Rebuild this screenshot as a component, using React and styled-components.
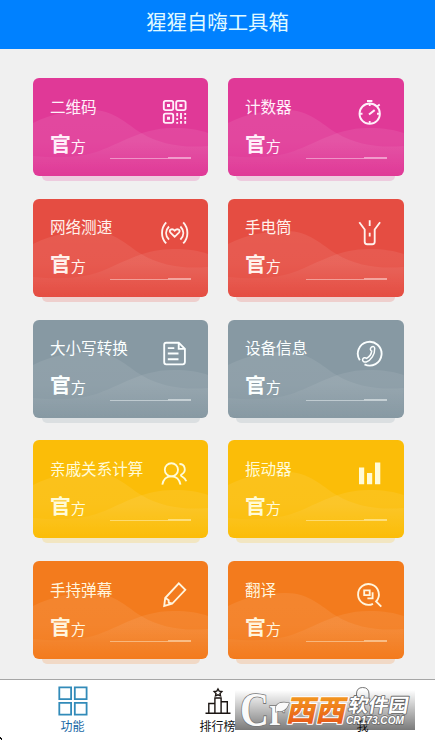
import React from 'react'
import styled, { createGlobalStyle } from 'styled-components'

const GlobalStyle = createGlobalStyle`
    * { box-sizing: border-box; }

    body {
        margin: 0;
        background: #f0f0f0;
        font-family: "Noto Sans CJK SC", "Noto Sans", sans-serif;
        overflow: hidden;
    }
`

const Page = styled.div`
    width: 435px;
    height: 740px;
    display: flex;
    flex-direction: column;
    position: relative;
    overflow: hidden;
`

const Header = styled.header`
    height: 49px;
    flex: none;
    padding-bottom: 8px;
    display: flex;
    align-items: center;
    justify-content: center;
    background: #0081ff;
`

const HeaderTitle = styled.h1`
    margin: 0;
    font-size: 20.4px;
    line-height: 30px;
    font-weight: 400;
    color: #e0faff;
`

const CardGrid = styled.main`
    flex: 1;
    padding: 29px 31px 0 33px;
    display: grid;
    grid-template-columns: 175.3px 175.7px;
    grid-auto-rows: 98px;
    column-gap: 19.7px;
    row-gap: 22.75px;
`

const Card = styled.section`
    position: relative;
    border-radius: 6px;
    background: ${props => props.$color};
    color: ${props => props.$ink};

    &::after {
        content: '';
        position: absolute;
        left: 8.5px;
        right: 8.5px;
        bottom: -5px;
        height: 5px;
        border-radius: 0 0 5px 5px;
        background: ${props => props.$color};
        opacity: 0.2;
    }
`

const Waves = styled.svg`
    position: absolute;
    inset: 0;
    width: 100%;
    height: 100%;
    border-radius: 6px;
`

const CardBody = styled.div`
    position: relative;
    height: 100%;
    padding: 15.5px 17px 0 16.9px;
    display: flex;
    flex-direction: column;
`

const CardTop = styled.div`
    display: flex;
    justify-content: space-between;
    height: 36px;
`

const CardName = styled.div`
    font-size: 15.6px;
    line-height: 24px;
    white-space: nowrap;
`

const CardIcon = styled.svg`
    width: 28px;
    height: 28px;
    flex: none;
    margin-top: 4.5px;
    margin-right: 2.5px;
    fill: none;
    stroke: currentColor;
    stroke-width: 1.85;
`

const Owner = styled.div`
    font-size: 15.2px;
    line-height: 26px;
    height: 26px;
    display: flex;
    align-items: baseline;

    b {
        font-size: 20.8px;
        font-weight: 700;
    }
`

const Progress = styled.div`
    align-self: flex-end;
    margin-top: 1.5px;
    width: 81px;
    height: 2px;
    display: flex;
    align-items: flex-end;

    &::before {
        content: '';
        flex: 1;
        height: 1px;
        background: currentColor;
        opacity: 0.45;
    }

    &::after {
        content: '';
        width: 23px;
        height: 2px;
        background: currentColor;
        opacity: 0.5;
    }
`

const TabBar = styled.nav`
    height: 61px;
    flex: none;
    display: grid;
    grid-template-columns: repeat(3, 1fr);
    border-top: 1px solid #a6a6a6;
    background: #fff;
`

const Tab = styled.div`
    display: flex;
    flex-direction: column;
    align-items: center;
    padding-top: 4.5px;
    font-size: 12px;
    line-height: 18px;
    color: ${props => (props.$active ? '#1767a5' : '#111')};

    svg {
        width: 32px;
        height: 32px;
        fill: none;
    }
`

const Watermark = styled.svg`
    position: absolute;
    left: 235px;
    top: 686px;
    width: 180px;
    height: 46px;
    overflow: visible;
`

const CornerMark = styled.svg`
    position: absolute;
    left: 0;
    bottom: 0;
    width: 3px;
    height: 3px;
`

const icons = {
    qrcode: (
        <>
            <rect x="2.8" y="2.9" width="9.4" height="9.2" rx="1.8" />
            <rect x="15.2" y="2.9" width="9.4" height="9.2" rx="1.8" />
            <rect x="2.8" y="15.6" width="9.4" height="9.2" rx="1.8" />
            <path d="M6 7.5h3M18.4 7.5h3M6 20.2h3" strokeWidth="3" />
            <path d="M16.2 15v3.2M16.2 20v2M20 15v6M20 23v2.8M24.2 15v2M24.2 19v2.4M24.2 23v2.8M16.2 24v1.8" />
        </>
    ),
    timer: (
        <>
            <circle cx="13.7" cy="15.7" r="10.2" />
            <path d="M11 3h5.4" strokeWidth="2" />
            <path d="M13.7 5.5V8M13.7 23v3M3.5 15.7h3M21 15.7h3M20.7 8.7l3-2.2" />
            <path d="M13 16.5l5.7-4.4" strokeWidth="2" />
        </>
    ),
    heartbeat: (
        <>
            <path d="M13.7 17.8l-4.2-4.1c-2.4-2.6 1.6-5 4.2-2 2.6-3 6.6-.6 4.2 2z" />
            <path d="M5.2 3.3C-.4 9.3-.4 18.6 5.2 24.4M8 7.5c-3.9 4-3.9 9 0 13.2M22.2 3.3c5.6 6 5.6 15.3 0 21.1M19.4 7.5c3.9 4 3.9 9 0 13.2" />
        </>
    ),
    torch: (
        <path d="M3.3 3.3l5.4 7.2v12.2q0 2.5 2.5 2.5h5q2.5 0 2.5-2.5V10.5l5.4-7.2M13.7 1.3v5.6M13.7 13.8v3.7" />
    ),
    document: (
        <>
            <path d="M5.2 2.7h12.5l6.2 6.2v13.2q0 2.2-2.2 2.2H5.2q-2 0-2-2V4.7q0-2 2-2zM17.7 2.7v6.2h6.2" />
            <path d="M6.8 8.1h6.5M6.8 13.5h10.7M6.8 19.2h10.7" />
        </>
    ),
    phone: (
        <>
            <path d="M3.8 20.3a11.9 11.9 0 1 1 4.7 4.1" />
            <path d="M15.3 7.2c1.9-1.3 3.3-.5 3.4 1.2.4 6.1-3.9 12.2-8.4 13.6-2.2.5-3.9-.9-3.7-2.4.2-1.7 2.5-2.7 4.1-1.2 2.5-1.5 4.7-4.5 5-7.3-1.5-.5-1.8-2.7-.4-3.9z" strokeWidth="1.5" />
        </>
    ),
    relatives: (
        <>
            <circle cx="10.4" cy="9.8" r="6.6" />
            <path d="M1.3 24.6c1-5.2 4.5-8.2 9.1-8.2s8 3 9.1 8.2M18.4 4c5.7-.2 7.4 7.3 2.4 10.2-1.1.6-1.2 1.4-.1 2 2.3 1.3 3.9 2.7 4.6 5" />
        </>
    ),
    bars: (
        <path d="M3 7.5h5.2v16.8H3zM11 12.9h5.2v11.4H11zM19 2.6h5.3v21.7H19z" fill="currentColor" stroke="none" />
    ),
    pencil: (
        <path d="M3.2 25l1-8L17.8 2.3l6.5 6.5-13.2 14zM4.5 17l3.2 2.2v2.5l3.4.6" />
    ),
    translate: (
        <>
            <path d="M17 22.8a10.4 10.4 0 1 1 3.1-2.3l5.2 5.2" />
            <path d="M8.2 9.3h5.5v4.8H8.2zM16.6 11.2v6.2h-5.2" />
        </>
    ),
}

const tools = [
    { name: '二维码', icon: 'qrcode', color: '#e03997', ink: '#fff0fa' },
    { name: '计数器', icon: 'timer', color: '#e03997', ink: '#fff0fa' },
    { name: '网络测速', icon: 'heartbeat', color: '#e54d42', ink: '#fff2ed' },
    { name: '手电筒', icon: 'torch', color: '#e54d42', ink: '#fff2ed' },
    { name: '大小写转换', icon: 'document', color: '#8799a3', ink: '#fbffff' },
    { name: '设备信息', icon: 'phone', color: '#8799a3', ink: '#fbffff' },
    { name: '亲戚关系计算', icon: 'relatives', color: '#fbbd08', ink: '#fffbd8' },
    { name: '振动器', icon: 'bars', color: '#fbbd08', ink: '#fffbd8' },
    { name: '手持弹幕', icon: 'pencil', color: '#f37b1d', ink: '#fff5de' },
    { name: '翻译', icon: 'translate', color: '#f37b1d', ink: '#fff5de' },
]

const ToolCard = ({ name, icon, color, ink }) => (
    <Card $color={color} $ink={ink}>
        <Waves viewBox="0 0 175 98" preserveAspectRatio="none">
            <defs>
                <linearGradient id={`wave-${icon}`} x1="0" y1="30" x2="0" y2="98" gradientUnits="userSpaceOnUse">
                    <stop offset="0" stopColor="#fff" stopOpacity="0.08" />
                    <stop offset="0.5" stopColor="#fff" stopOpacity="0.07" />
                    <stop offset="1" stopColor="#fff" stopOpacity="0" />
                </linearGradient>
            </defs>
            <g fill={`url(#wave-${icon})`}>
                <path d="M0 45C20 35 40 32 57 32C82 32 93 46 108 55C128 67 150 70 175 68V98H0z" />
                <path d="M0 78C22 80 38 80 56 76C82 70 104 50 140 50C156 50 166 52 175 55V98H0z" />
            </g>
        </Waves>
        <CardBody>
            <CardTop>
                <CardName>{name}</CardName>
                <CardIcon viewBox="0 0 28 28">{icons[icon]}</CardIcon>
            </CardTop>
            <Owner><b>官</b>方</Owner>
            <Progress />
        </CardBody>
    </Card>
)

const SiteWatermark = () => (
    <Watermark viewBox="0 0 180 46">
        <defs>
            <linearGradient id="shade" x1="0" y1="0" x2="0" y2="1">
                <stop offset="0" stopColor="#000" stopOpacity="0" />
                <stop offset="1" stopColor="#000" stopOpacity="0.52" />
            </linearGradient>
            <linearGradient id="flame" x1="0" y1="0" x2="0" y2="1">
                <stop offset="0" stopColor="#f7ad20" />
                <stop offset="1" stopColor="#e44b18" />
            </linearGradient>
        </defs>
        <rect y="4" width="180" height="40" fill="url(#shade)" />
        <g fontFamily='"Liberation Serif", serif' fontWeight="700" fill="#fafafa" stroke="#777" strokeWidth="1.6" paintOrder="stroke">
            <text x="5" y="39.5" fontSize="48" textLength="29" lengthAdjust="spacingAndGlyphs">C</text>
            <text x="34" y="39" fontSize="41" textLength="16" lengthAdjust="spacingAndGlyphs">r</text>
            <path d="M41 26C39 18 45 15 54 17C52 23 48 26 43 25z" strokeWidth="1.2" />
        </g>
        <g fontFamily='"Noto Sans CJK SC", sans-serif' fontWeight="900" paintOrder="stroke" strokeLinejoin="round">
            <g transform="translate(50.5 35.4) skewX(-12)" fill="url(#flame)" stroke="#fff" strokeWidth="2">
                <text fontSize="29.5" textLength="59" lengthAdjust="spacingAndGlyphs">西西</text>
            </g>
            <g transform="translate(112.5 26.2) skewX(-10)" fontWeight="700" fill="#fff" stroke="#666" strokeWidth="1.6">
                <text fontSize="19" textLength="60" lengthAdjust="spacingAndGlyphs">软件园</text>
            </g>
        </g>
        <text x="111" y="37.7" fontFamily='"Liberation Sans", sans-serif' fontSize="10.5" fontWeight="700" fontStyle="italic" fill="#fff" stroke="#666" strokeWidth="1.4" paintOrder="stroke" textLength="58" lengthAdjust="spacingAndGlyphs">CR173.COM</text>
    </Watermark>
)

const App = () => (
    <>
        <GlobalStyle />
        <Page>
            <Header><HeaderTitle>猩猩自嗨工具箱</HeaderTitle></Header>
            <CardGrid>
                {tools.map(tool => <ToolCard key={tool.icon} {...tool} />)}
            </CardGrid>
            <TabBar>
                <Tab $active>
                    <svg viewBox="0 0 32 32" stroke="#328bb9" strokeWidth="1.8">
                        <path d="M2.3 2.3h11.8v11.8H2.3zM17.8 2.3h11.8v11.8H17.8zM2.3 17.8h11.8v11.8H2.3zM17.8 17.8h11.8v11.8H17.8z" />
                    </svg>
                    功能
                </Tab>
                <Tab>
                    <svg viewBox="0 0 32 32" stroke="#1b1512" strokeWidth="1.4">
                        <path d="M3.5 28.2h25M6.8 28V18.5h5.6M12.9 28V13h6.2v15M19.5 16.8h5.8V28" />
                        <path d="M16 4l1.2 2.2 2.6.4-1.8 1.8.5 2.5-2.5-1.1-2.5 1.1.5-2.5-1.8-1.8 2.6-.4z" />
                    </svg>
                    排行榜
                </Tab>
                <Tab>
                    <svg viewBox="0 0 32 32" stroke="#777" strokeWidth="1">
                        <path d="M9.5 14V9q0-6.5 6.2-6.5T22 9v5q-1 5-6.3 5T9.5 14z" />
                    </svg>
                    我
                </Tab>
            </TabBar>
            <SiteWatermark />
            <CornerMark viewBox="0 0 3 3"><path d="M0 0h1v1h1v2H1V2H0z" fill="#111" /></CornerMark>
        </Page>
    </>
)

export default App
